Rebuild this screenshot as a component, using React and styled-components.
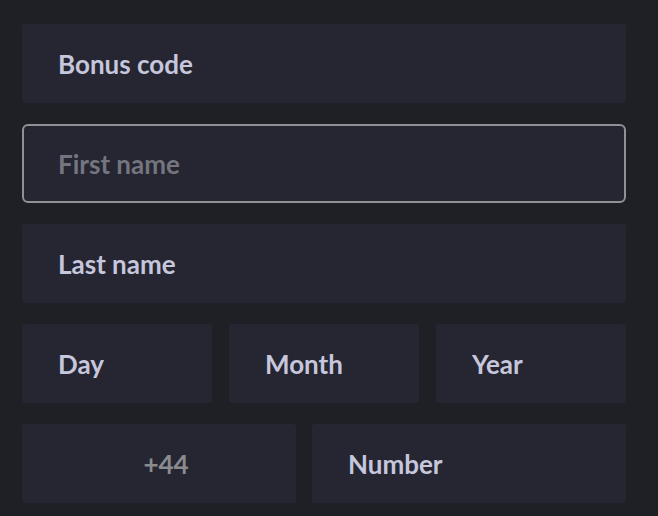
import styled, { createGlobalStyle } from 'styled-components';

const GlobalStyle = createGlobalStyle`
  html, body {
    margin: 0;
    padding: 0;
    background: #1f2025;
  }
  body {
    font-family: Lato, "Noto Sans", sans-serif;
  }
`;

const Form = styled.form`
  display: flex;
  flex-direction: column;
  gap: 21px;
  padding: 24px 32px 0 22px;
  width: 604px;
`;

const Row = styled.div`
  display: grid;
  grid-template-columns: ${(p) => p.$cols};
  gap: ${(p) => p.$gap || '17px'};
`;

const Field = styled.input`
  box-sizing: border-box;
  width: 100%;
  height: 79px;
  margin: 0;
  padding: 1px 0 0 ${(p) => (p.$center ? '14px' : '34px')};
  text-align: ${(p) => (p.$center ? 'center' : 'left')};
  background: #252631;
  border: 2px solid ${(p) => (p.$focused ? '#909196' : 'transparent')};
  border-radius: ${(p) => (p.$focused ? '6px' : '3px')};
  font-family: Lato, "Noto Sans", sans-serif;
  font-size: 26px;
  font-weight: 700;
  color: #c6c6dd;
  outline: none;

  &::placeholder {
    color: ${(p) => (p.$muted ? '#74757f' : '#c6c6dd')};
    opacity: 1;
  }
`;

const Prefix = styled(Field)`
  color: #8b8b8f;
`;

export default function App() {
  return (
    <>
      <GlobalStyle />
      <Form onSubmit={(e) => e.preventDefault()}>
        <Field placeholder="Bonus code" />
        <Field placeholder="First name" $focused $muted />
        <Field placeholder="Last name" />
        <Row $cols="1fr 1fr 1fr">
          <Field placeholder="Day" />
          <Field placeholder="Month" />
          <Field placeholder="Year" />
        </Row>
        <Row $cols="274px 1fr" $gap="16px">
          <Prefix defaultValue="+44" $center readOnly />
          <Field placeholder="Number" />
        </Row>
      </Form>
    </>
  );
}
